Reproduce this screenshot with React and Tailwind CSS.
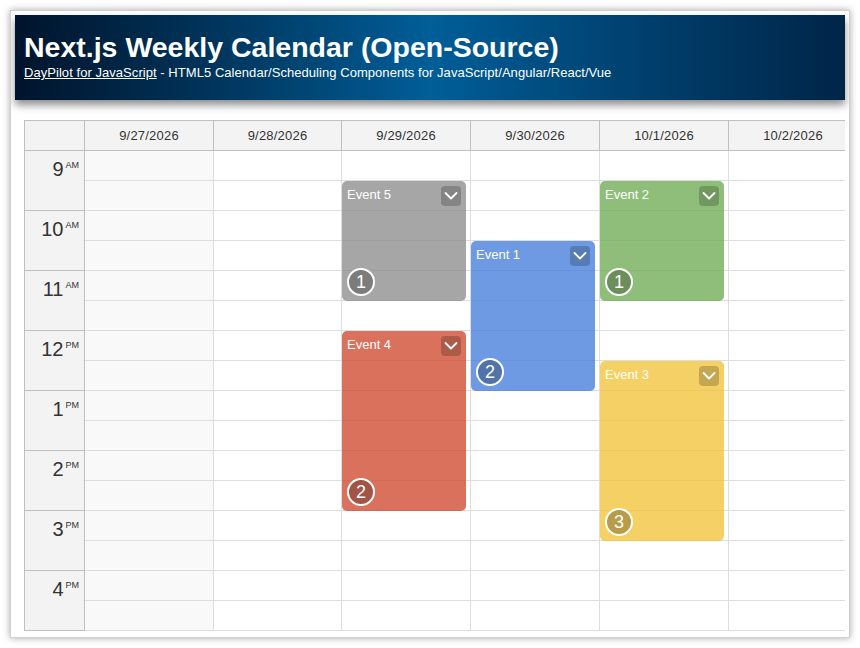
const days = ["9/27/2026", "9/28/2026", "9/29/2026", "9/30/2026", "10/1/2026", "10/2/2026"];
const dayWidths = ["w-[129px]", "w-[128px]", "w-[129px]", "w-[129px]", "w-[129px]", "w-[129px]"];

const hours = [
  { h: "9", ap: "AM" },
  { h: "10", ap: "AM" },
  { h: "11", ap: "AM" },
  { h: "12", ap: "PM" },
  { h: "1", ap: "PM" },
  { h: "2", ap: "PM" },
  { h: "3", ap: "PM" },
  { h: "4", ap: "PM" },
];

// start/end in half-hour slots from 9:00
const events = [
  { id: 5, text: "Event 5", day: 2, start: 1, end: 5, color: "bg-[#888888]/75", badge: 1 },
  { id: 1, text: "Event 1", day: 3, start: 3, end: 8, color: "bg-[#3c78d8]/75", badge: 2 },
  { id: 2, text: "Event 2", day: 4, start: 1, end: 5, color: "bg-[#6aa84f]/75", badge: 1 },
  { id: 4, text: "Event 4", day: 2, start: 6, end: 12, color: "bg-[#cc4125]/75", badge: 2 },
  { id: 3, text: "Event 3", day: 4, start: 7, end: 13, color: "bg-[#f1c232]/75", badge: 3 },
];

function Chevron() {
  return (
    <svg viewBox="0 0 20 20" className="w-5 h-5" fill="none" stroke="white" strokeWidth="1.8" strokeLinecap="round" strokeLinejoin="round">
      <polyline points="4.5,7 10,12.5 15.5,7" />
    </svg>
  );
}

function CalendarEvent({ ev }) {
  return (
    <div
      className={`absolute left-0 w-[124px] rounded-[5px] ${ev.color} text-white`}
      style={{ top: ev.start * 30, height: ev.end * 30 - ev.start * 30 }}
    >
      <div className="pl-[5px] pt-[6px] text-[13px] leading-[15px]">{ev.text}</div>
      <div className="absolute top-[5px] right-[5px] w-5 h-5 rounded-[4px] bg-black/20 flex items-center justify-center">
        <Chevron />
      </div>
      <div className="absolute left-[5px] bottom-[5px] w-[28px] h-[28px] rounded-full border-2 border-white bg-black/25 flex items-center justify-center text-[18px] leading-none">
        {ev.badge}
      </div>
    </div>
  );
}

export default function App() {
  return (
    <div className="min-h-screen bg-white p-[10px]" style={{ fontFamily: "'Liberation Sans', Arial, sans-serif" }}>
      <div className="w-[840px] h-[628px] border border-[#cfcfcf] bg-white p-[4px] shadow-[0_0_7px_rgba(0,0,0,0.35)] overflow-hidden">
        <div className="h-[85px] pl-[9px] pt-[16px] text-white bg-gradient-to-r from-[#00142b] via-[#005e98] to-[#002548] shadow-[0_5px_8px_rgba(0,0,0,0.45)] relative">
          <h1 className="text-[28.5px] leading-[33px] font-bold">Next.js Weekly Calendar (Open-Source)</h1>
          <div className="text-[13px] leading-[16px] mt-[1px] tracking-[0.05px]">
            <a href="#" className="underline text-white">DayPilot for JavaScript</a> - HTML5 Calendar/Scheduling Components for JavaScript/Angular/React/Vue
          </div>
        </div>

        <div className="mt-[20px] ml-[9px] w-[821px] h-[511px] overflow-hidden text-[#333]">
          <div className="flex w-max border-t border-l border-[#c0c0c0]">
            {/* row header */}
            <div className="w-[60px] shrink-0 bg-[#f3f3f3] border-r border-[#c0c0c0]">
              <div className="h-[30px] border-b border-[#c0c0c0]" />
              {hours.map((x) => (
                <div key={x.h} className="h-[60px] border-b border-[#c0c0c0] flex justify-end pr-[5px] pt-[8px]">
                  <span className="text-[20px] leading-[20px]">{x.h}</span>
                  <span className="text-[9px] leading-[9px] ml-[2px] mt-[2px]">{x.ap}</span>
                </div>
              ))}
              <div className="h-[30px]" />
            </div>

            {days.map((d, i) => (
              <div key={d} className={`${dayWidths[i]} shrink-0`}>
                <div className="h-[30px] bg-[#f3f3f3] border-b border-r border-[#c0c0c0] flex items-center justify-center text-[13px] tracking-[0.2px]">
                  {d}
                </div>
                <div className={`relative ${i === 0 ? "bg-[#f9f9f9]" : "bg-white"}`}>
                  {Array.from({ length: 17 }).map((_, s) => (
                    <div key={s} className="h-[30px] border-b border-r border-[#dddddd]" />
                  ))}
                  {events.filter((e) => e.day === i).map((ev) => (
                    <CalendarEvent key={ev.id} ev={ev} />
                  ))}
                </div>
              </div>
            ))}
          </div>
        </div>
      </div>
    </div>
  );
}
